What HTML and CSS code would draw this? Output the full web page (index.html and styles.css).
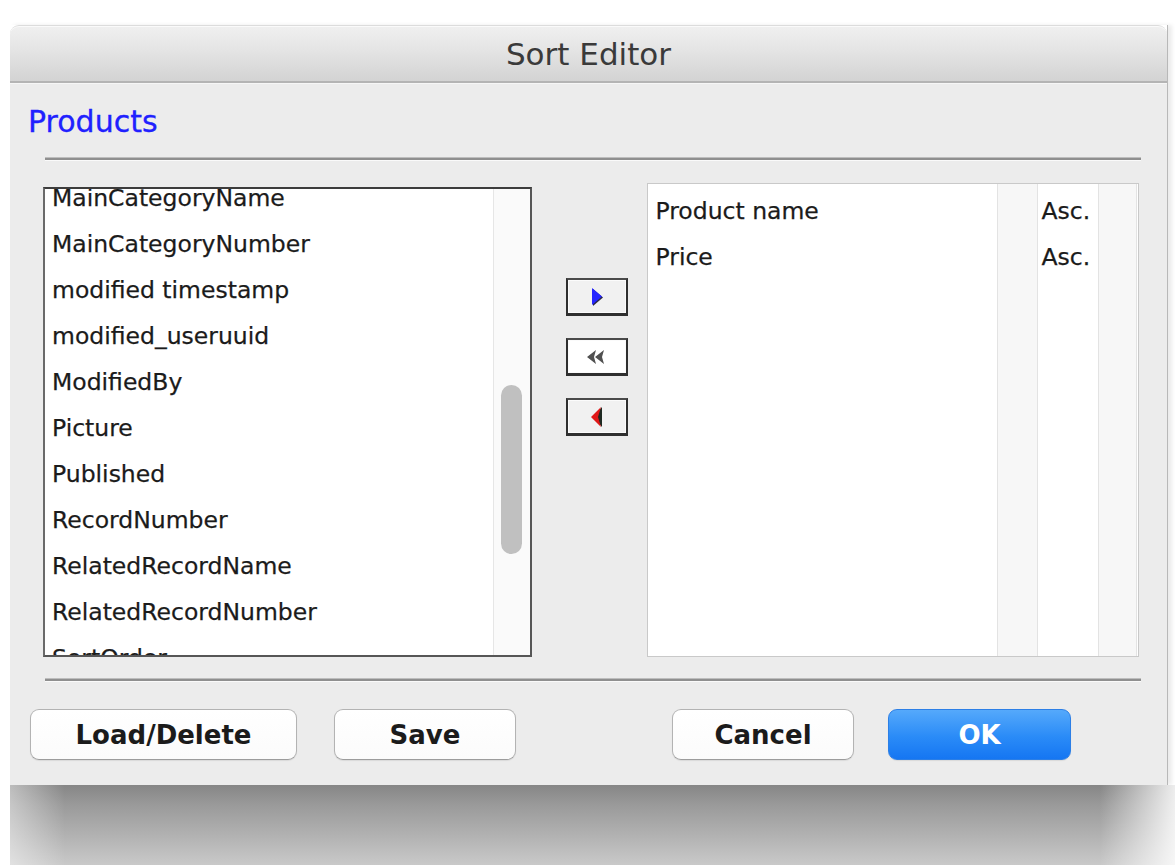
FILE: index.html
```html
<!DOCTYPE html>
<html lang="en">
<head>
<meta charset="utf-8">
<title>Sort Editor</title>
<link rel="stylesheet" href="styles.css">
</head>
<body>
<div class="stage">
  <div class="window">
    <div class="titlebar">Sort Editor</div>
    <div class="content">
      <div class="table-name">Products</div>
      <div class="rule"></div>

      <div class="lists">
        <div class="field-list">
          <div class="field-viewport">
            <ul class="fields">
              <li>MainCategoryName</li>
              <li>MainCategoryNumber</li>
              <li>modified timestamp</li>
              <li>modified_useruuid</li>
              <li>ModifiedBy</li>
              <li>Picture</li>
              <li>Published</li>
              <li>RecordNumber</li>
              <li>RelatedRecordName</li>
              <li>RelatedRecordNumber</li>
              <li>SortOrder</li>
            </ul>
          </div>
          <div class="scrollbar"><div class="thumb"></div></div>
        </div>

        <div class="movers">
          <button class="mover" type="button" title="Add">
            <svg width="18" height="22" viewBox="0 0 18 22">
              <polygon points="5,3 15,11.5 5,20" fill="#2a2a44"/>
              <polygon points="4,2 14,10.5 4,19" fill="#2525ff"/>
            </svg>
          </button>
          <button class="mover mover-white" type="button" title="Remove all">
            <svg width="24" height="18" viewBox="0 0 24 18">
              <polygon points="2,9 11,2 9,9 11,16" fill="#505050"/>
              <polygon points="10,9 19,2 17,9 19,16" fill="#505050"/>
            </svg>
          </button>
          <button class="mover" type="button" title="Remove">
            <svg width="18" height="24" viewBox="0 0 18 24">
              <polygon points="14,2 5,12 14,22" fill="#1f2a22"/>
              <polygon points="13,2 3,12 13,22 10,12" fill="#e01818"/>
            </svg>
          </button>
        </div>

        <div class="sort-list">
          <div class="col col-name">
            <div class="cell">Product name</div>
            <div class="cell">Price</div>
          </div>
          <div class="col col-band"></div>
          <div class="col col-order">
            <div class="cell">Asc.</div>
            <div class="cell">Asc.</div>
          </div>
          <div class="col col-band col-band-end"></div>
          <div class="col col-tail"></div>
        </div>
      </div>

      <div class="rule rule-bottom"></div>

      <div class="actions">
        <div class="group">
          <button class="btn btn-wide" type="button">Load/Delete</button>
          <button class="btn" type="button">Save</button>
        </div>
        <div class="group group-right">
          <button class="btn" type="button">Cancel</button>
          <button class="btn btn-default" type="button">OK</button>
        </div>
      </div>
    </div>
  </div>
  <div class="drop-shadow"></div>
</div>
</body>
</html>
```

FILE: styles.css
```css
* {
  box-sizing: border-box;
}

html,
body {
  margin: 0;
  padding: 0;
  background: #ffffff;
}

body {
  font-family: "DejaVu Sans", "Liberation Sans", sans-serif;
  color: #1b1b1b;
  overflow: hidden;
}

.stage {
  width: 1175px;
  height: 865px;
  padding: 25px 0 0 10px;
}

/* dialog window */
.window {
  width: 1158px;
  border-right: 1px solid #b8b8b8;
  box-shadow: 4px 0 4px rgba(0, 0, 0, 0.08);
}

.titlebar {
  height: 58px;
  border-radius: 9px 9px 0 0;
  border-top: 1px solid #dcdcdc;
  border-bottom: 2px solid #b4b4b4;
  background: linear-gradient(#f0f0f0, #e4e4e4 45%, #d3d3d3);
  box-shadow: inset 0 1px 0 #fafafa;
  text-align: center;
  font-size: 31px;
  line-height: 56px;
  color: #3a3a3a;
}

.content {
  height: 702px;
  background: #ececec;
  border-top: 1px solid #f6f6f6;
  padding-top: 20px;
}

.table-name {
  padding-left: 18px;
  font-size: 30px;
  line-height: 36px;
  color: #2020ff;
  -webkit-text-stroke: 0.3px #2020ff;
}

/* etched separators */
.rule {
  margin: 17px 26px 0 35px;
  height: 4px;
  border-top: 1px solid #bdbdbd;
  background: #8f8f8f;
  border-bottom: 1px solid #fafafa;
}

.rule-bottom {
  margin-top: 21px;
}

/* list area */
.lists {
  display: flex;
  margin: 22px 28px 0 33px;
  height: 474px;
}

.field-list {
  display: flex;
  margin-top: 4px;
  width: 489px;
  height: 470px;
  border: 2px solid #565656;
  border-top-color: #3c3c3c;
  border-left-color: #6a6a6a;
  background: #ffffff;
}

.field-viewport {
  flex: 1;
  overflow: hidden;
}

.fields {
  list-style: none;
  margin: -14px 0 0 0;
  padding: 0 0 0 7px;
}

.fields li,
.cell {
  height: 46px;
  line-height: 46px;
  font-size: 23.5px;
  white-space: nowrap;
  -webkit-text-stroke: 0.25px #1b1b1b;
}

.scrollbar {
  width: 37px;
  background: #fafafa;
  border-left: 1px solid #e6e6e6;
  padding: 196px 0 0 7px;
}

.thumb {
  width: 21px;
  height: 169px;
  border-radius: 11px;
  background: #c0c0c0;
}

.movers {
  width: 116px;
  display: flex;
  flex-direction: column;
  gap: 22px;
  padding: 95px 0 0 34px;
}

.mover {
  width: 62px;
  height: 38px;
  padding: 0;
  display: flex;
  align-items: center;
  justify-content: center;
  background: #f1f1f1;
  border: 2px solid #2f2f2f;
  border-top-color: #4a4a4a;
  border-bottom-width: 3px;
  box-shadow: inset 0 0 0 1px #fbfbfb;
}

.mover-white {
  background: #ffffff;
}

.sort-list {
  margin-left: auto;
  width: 492px;
  height: 474px;
  display: flex;
  border: 1px solid #c9c9c9;
  background: #ffffff;
}

.col {
  padding-top: 4px;
}

.col-name {
  width: 349px;
}

.col-band {
  width: 40px;
  background: #f7f7f7;
  border-left: 1px solid #e3e3e3;
}

.col-order {
  width: 61px;
  border-left: 1px solid #e3e3e3;
}

.col-band-end {
  width: 38px;
}

.col-tail {
  flex: 1;
  border-left: 1px solid #e3e3e3;
}

.col-name .cell {
  padding-left: 7px;
}

.col-order .cell {
  padding-left: 3px;
}

/* dialog buttons */
.actions {
  display: flex;
  justify-content: space-between;
  margin: 27px 96px 0 20px;
}

.group {
  display: flex;
  gap: 37px;
}

.group-right {
  gap: 34px;
}

.btn {
  width: 182px;
  height: 51px;
  border-radius: 9px;
  border: 1px solid #b3b3b3;
  border-bottom-color: #9c9c9c;
  background: linear-gradient(#ffffff, #fbfbfb);
  box-shadow: 0 1px 1px rgba(0, 0, 0, 0.08);
  font-family: "DejaVu Sans", "Liberation Sans", sans-serif;
  font-weight: bold;
  font-size: 26px;
  color: #1b1b1b;
  padding: 0;
}

.btn-wide {
  width: 267px;
}

.btn-default {
  width: 183px;
  border-color: #2c7fe6;
  background: linear-gradient(#55a9fb, #2a8bf7 55%, #1576f2);
  color: #ffffff;
}

/* shadow cast below the window */
.drop-shadow {
  width: 1165px;
  height: 80px;
  background:
    linear-gradient(to right, rgba(255, 255, 255, 0.45), rgba(255, 255, 255, 0) 55px, rgba(255, 255, 255, 0) 1090px, rgba(255, 255, 255, 0.85)),
    linear-gradient(#868686, #9a9a9a 25%, #b6b6b6 70%, #c9c9c9);
}
```
